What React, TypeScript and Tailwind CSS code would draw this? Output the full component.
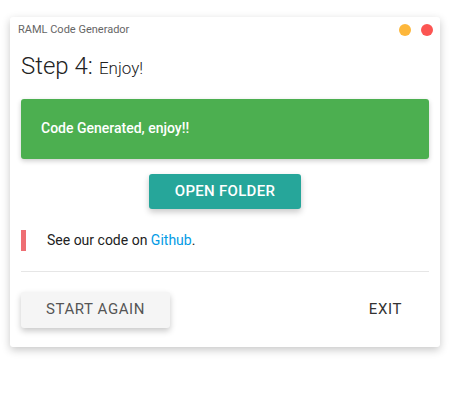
export default function App() {
  return (
    <div className="w-[450px] h-[400px] bg-white pt-[17px] pl-[10px] font-['Roboto',sans-serif]">
      <div className="w-[430px] h-[330px] bg-white rounded-[3px] shadow-[0_3px_8px_rgba(0,0,0,0.22)] flex flex-col px-[11px]">
        <div className="flex items-center justify-between h-[24px] mt-[1px] -ml-[3px] -mr-[4px]">
          <span className="text-[11px] text-[#666]">RAML Code Generador</span>
          <div className="flex gap-[10px]">
            <span className="w-[12px] h-[12px] rounded-full bg-[#fdb73b]" />
            <span className="w-[12px] h-[12px] rounded-full bg-[#fc5552]" />
          </div>
        </div>
        <div className="mt-[9px] flex items-baseline text-[#222] font-light">
          <span className="text-[24px] leading-[30px]">Step 4:</span>
          <span className="text-[17px] ml-[6px]">Enjoy!</span>
        </div>
        <div className="mt-[17px] h-[60px] bg-[#4caf50] rounded-[3px] shadow-[0_2px_5px_rgba(0,0,0,0.2)] flex items-center pl-[20px]">
          <span className="text-white text-[14px] font-medium">Code Generated, enjoy!!</span>
        </div>
        <div className="mt-[15px] flex justify-center">
          <button className="w-[152px] h-[35px] bg-[#26a69a] rounded-[3px] shadow-[0_3px_6px_rgba(0,0,0,0.22)] text-white text-[15px] font-medium uppercase tracking-[0.3px]">
            Open Folder
          </button>
        </div>
        <div className="mt-[21px] flex items-center border-l-[5px] border-[#ee6e73] h-[21px] pl-[21px]">
          <span className="text-[14px] text-[#222]">
            See our code on <span className="text-[#039be5]">Github</span>.
          </span>
        </div>
        <div className="mt-[20px] h-px bg-[#e6e6e6]" />
        <div className="mt-[20px] flex items-center justify-between">
          <button className="w-[149px] h-[36px] bg-[#f5f5f5] rounded-[3px] shadow-[0_3px_6px_rgba(0,0,0,0.22)] text-[#555] text-[15px] uppercase tracking-[0.6px]">
            Start Again
          </button>
          <button className="h-[36px] pl-[28px] pr-[27px] text-[#333] text-[15px] uppercase tracking-[0.6px]">
            Exit
          </button>
        </div>
      </div>
    </div>
  );
}
